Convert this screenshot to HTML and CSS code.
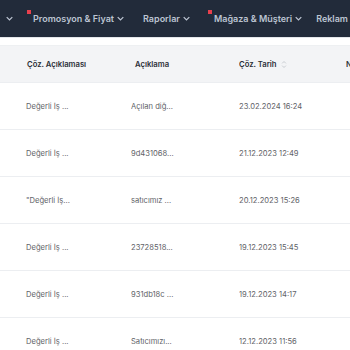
FILE: index.html
```html
<!doctype html>
<html lang="tr">
<head>
	<meta charset="utf-8">
	<title>Çözümlenen Talepler</title>
	<link rel="stylesheet" href="styles.css">
</head>
<body>
	<nav class="topnav">
		<span class="nav-item nav-cut"><svg class="chev" viewBox="0 0 10 6"><path d="M1 1l4 4 4-4"/></svg></span>
		<span class="nav-item has-dot">Promosyon &amp; Fiyat<svg class="chev" viewBox="0 0 10 6"><path d="M1 1l4 4 4-4"/></svg></span>
		<span class="nav-item">Raporlar<svg class="chev" viewBox="0 0 10 6"><path d="M1 1l4 4 4-4"/></svg></span>
		<span class="nav-item has-dot nav-store">Mağaza &amp; Müşteri<svg class="chev" viewBox="0 0 10 6"><path d="M1 1l4 4 4-4"/></svg></span>
		<span class="nav-item">Reklam Yönetimi</span>
	</nav>

	<div class="table">
		<div class="row head">
			<div class="cell">Çöz. Açıklaması</div>
			<div class="cell">Açıklama</div>
			<div class="cell">Çöz. Tarih
				<svg class="sort" viewBox="0 0 8 12"><path d="M1.5 4.5L4 2l2.5 2.5M1.5 7.5L4 10l2.5-2.5"/></svg>
			</div>
			<div class="cell">Not</div>
		</div>
		<div class="row">
			<div class="cell">Değerli İş ...</div>
			<div class="cell">Açılan diğ...</div>
			<div class="cell">23.02.2024 16:24</div>
			<div class="cell"></div>
		</div>
		<div class="row">
			<div class="cell">Değerli İş ...</div>
			<div class="cell">9d431068...</div>
			<div class="cell">21.12.2023 12:49</div>
			<div class="cell"></div>
		</div>
		<div class="row">
			<div class="cell">"Değerli İş...</div>
			<div class="cell">satıcımız ...</div>
			<div class="cell">20.12.2023 15:26</div>
			<div class="cell"></div>
		</div>
		<div class="row">
			<div class="cell">Değerli İş ...</div>
			<div class="cell">23728518...</div>
			<div class="cell">19.12.2023 15:45</div>
			<div class="cell"></div>
		</div>
		<div class="row">
			<div class="cell">Değerli İş ...</div>
			<div class="cell">931db18c ...</div>
			<div class="cell">19.12.2023 14:17</div>
			<div class="cell"></div>
		</div>
		<div class="row">
			<div class="cell">Değerli İş ...</div>
			<div class="cell">Satıcımızı...</div>
			<div class="cell">12.12.2023 11:56</div>
			<div class="cell"></div>
		</div>
	</div>
</body>
</html>
```
FILE: styles.css
```css
body {
	margin: 0;
	width: 350px;
	overflow: hidden;
	font-family: Inter, "Noto Sans", sans-serif;
	background: #fff;
}

.topnav {
	display: flex;
	align-items: center;
	height: 37px;
	background: #222b3a;
	white-space: nowrap;
	overflow: hidden;
	border-bottom: 1px solid #e3e6ea;
}

.nav-item {
	position: relative;
	display: flex;
	align-items: center;
	color: #bcc4d2;
	font-size: 9px;
	font-weight: 600;
	margin-right: 19px;
	flex-shrink: 0;
}

.nav-cut {
	margin-left: 3px;
	margin-right: 20px;
}

.nav-store {
	margin-left: 5px;
	margin-right: 14px;
}

.has-dot::before {
	content: "";
	position: absolute;
	left: -6px;
	top: -3px;
	width: 4px;
	height: 4px;
	background: #e8404d;
}

.chev {
	width: 7px;
	height: 5px;
	margin-left: 3px;
	fill: none;
	stroke: #bcc4d2;
	stroke-width: 1.8;
}

.table {
	margin-top: 7px;
}

.row {
	display: grid;
	grid-template-columns: 131px 108px 107px 1fr;
	height: 46px;
	align-items: center;
	border-bottom: 1px solid #eceef1;
	font-size: 7.6px;
	color: #5f6368;
	white-space: nowrap;
}

.row.head {
	height: 36px;
	background: #f3f4f6;
	color: #2b2f36;
	font-weight: 600;
	font-size: 7.7px;
	border-top: 1px solid #eef0f2;
}

.cell:first-child {
	padding-left: 26px;
}

.head .cell:first-child {
	padding-left: 27px;
}

.head .cell:nth-child(2) {
	padding-left: 4px;
}

.cell {
	display: flex;
	align-items: center;
	overflow: hidden;
}

.sort {
	width: 6px;
	height: 9px;
	margin-left: 4px;
	fill: none;
	stroke: #b9bdc4;
	stroke-width: 1;
}
```
